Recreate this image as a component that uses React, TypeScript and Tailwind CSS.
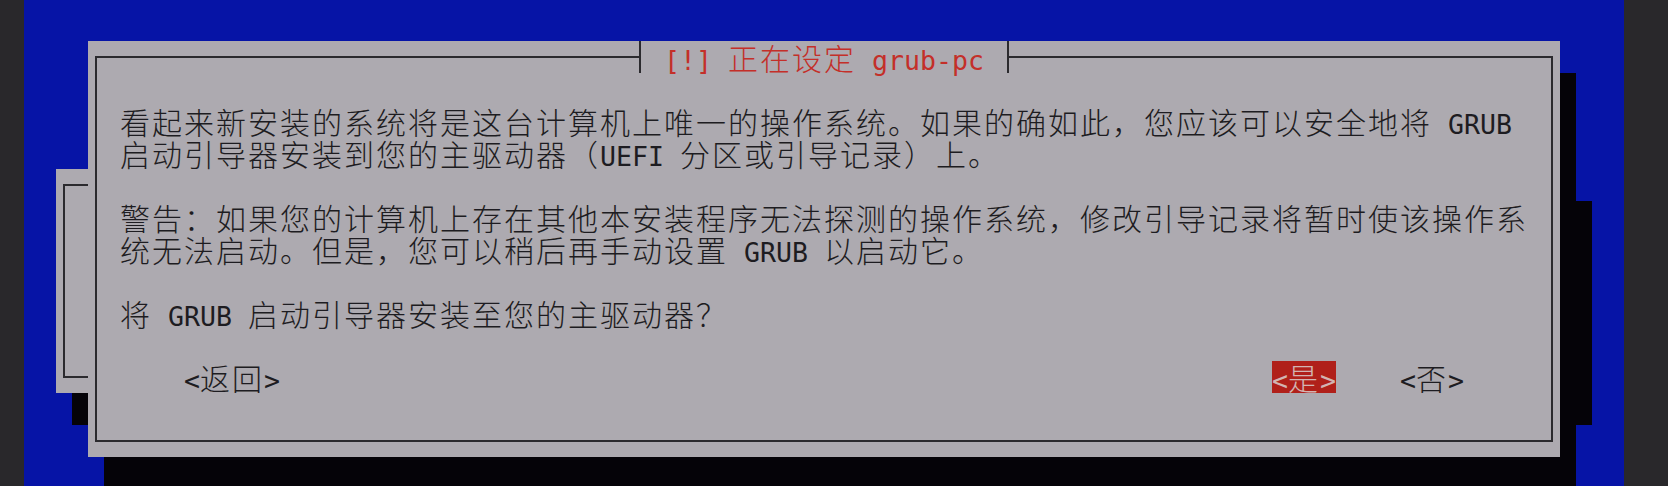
import React from "react";

// Full-width characters (CJK ideographs, fullwidth punctuation) take two terminal cells.
const WIDE = /[\u2e80-\uffef]/;

function Cells({ text }: { text: string }) {
  const parts: { wide: boolean; s: string }[] = [];
  for (const ch of text) {
    const wide = WIDE.test(ch);
    const last = parts[parts.length - 1];
    if (last && last.wide === wide) last.s += ch;
    else parts.push({ wide, s: ch });
  }
  return (
    <>
      {parts.map((p, i) =>
        p.wide ? (
          <span
            key={i}
            className="inline-block h-[32px] align-top font-['Noto_Sans_CJK_SC','Noto_Sans_CJK_JP',sans-serif] text-[30px] font-light leading-[32px] tracking-[2px]"
          >
            {p.s}
          </span>
        ) : (
          <span
            key={i}
            className="inline-block h-[32px] align-top font-['DejaVu_Sans_Mono','Liberation_Mono',monospace] text-[26.58px] leading-[40px]"
          >
            {p.s}
          </span>
        )
      )}
    </>
  );
}

function Row({ text }: { text: string }) {
  return (
    <div className="h-[32px] whitespace-pre leading-[32px] text-[#1d1c21]">
      <Cells text={text} />
    </div>
  );
}

function Window({ className, children }: { className: string; children?: React.ReactNode }) {
  return (
    <div className={`absolute bg-[#adaab0] px-[7px] py-[15px] shadow-[16px_32px_0_0_#050308] ${className}`}>
      <div className="relative h-full border-2 border-[#2b2a2e]">{children}</div>
    </div>
  );
}

export default function App() {
  return (
    <div className="flex h-[486px] w-[1668px] overflow-hidden bg-[#29282b]">
      <div className="w-[24px] shrink-0" />
      <div className="relative h-full w-[1600px] shrink-0 overflow-hidden bg-[#0614a6]">
        {/* previous installer dialog, mostly hidden */}
        <Window className="left-[32px] top-[169px] h-[224px] w-[1520px]" />

        {/* grub-pc question */}
        <Window className="left-[64px] top-[41px] h-[416px] w-[1472px]">
          <div className="absolute -top-[17px] left-1/2 flex h-[32px] w-[370px] -translate-x-1/2 items-start justify-center whitespace-pre border-x-2 border-[#2b2a2e] bg-[#adaab0] leading-[32px] text-[#c42f29]">
            <Cells text="[!] 正在设定 grub-pc" />
          </div>

          <div className="flex flex-col pl-[23px] pt-[47px]">
            <Row text="看起来新安装的系统将是这台计算机上唯一的操作系统。如果的确如此，您应该可以安全地将 GRUB" />
            <Row text="启动引导器安装到您的主驱动器（UEFI 分区或引导记录）上。" />
            <div className="mt-[32px]">
              <Row text="警告：如果您的计算机上存在其他本安装程序无法探测的操作系统，修改引导记录将暂时使该操作系" />
              <Row text="统无法启动。但是，您可以稍后再手动设置 GRUB 以启动它。" />
            </div>
            <div className="mt-[32px]">
              <Row text="将 GRUB 启动引导器安装至您的主驱动器？" />
            </div>
            <div className="mt-[32px] flex h-[32px] pr-[87px] leading-[32px]">
              <div className="ml-[64px] h-[32px] whitespace-pre text-[#1d1c21]">
                <Cells text="<返回>" />
              </div>
              <div className="ml-auto h-[32px] whitespace-pre bg-[#b0201a] text-[#d2b4b2]">
                <Cells text="<是>" />
              </div>
              <div className="ml-[64px] h-[32px] whitespace-pre text-[#1d1c21]">
                <Cells text="<否>" />
              </div>
            </div>
          </div>
        </Window>
      </div>
      <div className="flex-1" />
    </div>
  );
}
